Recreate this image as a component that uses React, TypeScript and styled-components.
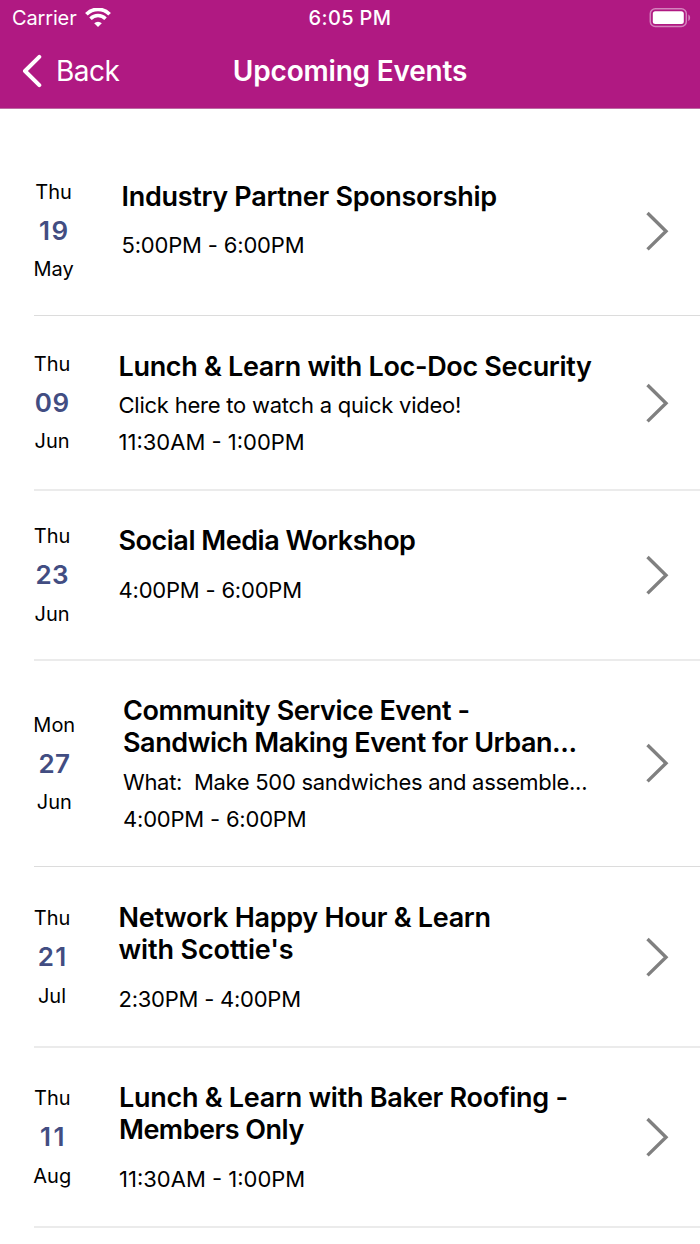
import React from "react";
import styled, { createGlobalStyle } from "styled-components";

const GlobalStyle = createGlobalStyle`
  * { box-sizing: border-box; }
  body { margin: 0; background: #fff; }
`;

const Screen = styled.div`
  width: 700px;
  height: 1244px;
  overflow: hidden;
  background: #fff;
  color: #000;
  font-family: Inter, "Liberation Sans", sans-serif;
`;

const Header = styled.header`
  height: 109px;
  background: #b01982;
  border-bottom: 1px solid #bd6aa3;
  color: #fff;
`;

const StatusBar = styled.div`
  height: 36px;
  padding: 0 9px 0 12px;
  display: grid;
  grid-template-columns: 1fr auto 1fr;
  align-items: center;
  font-size: 20px;
`;

const Carrier = styled.div`
  display: flex;
  align-items: center;
  gap: 8px;
  letter-spacing: -0.15px;

  svg {
    margin-top: -2px;
  }
`;

const Clock = styled.div`
  font-weight: 500;
  letter-spacing: 0.35px;
  margin-right: 3px;
`;

const Battery = styled.svg`
  justify-self: end;
`;

const NavBar = styled.nav`
  height: 70px;
  padding: 0 22px;
  display: grid;
  grid-template-columns: 1fr auto 1fr;
  align-items: center;
`;

const BackButton = styled.a`
  display: flex;
  align-items: center;
  gap: 14px;
  font-size: 28px;
  letter-spacing: -0.5px;
`;

const PageTitle = styled.h1`
  margin: 0;
  font-size: 28px;
  font-weight: 600;
  letter-spacing: -0.2px;
`;

const List = styled.main`
  padding: 37px 0 0 34px;
`;

const Row = styled.article<{ $height: number; $softRule?: boolean }>`
  height: ${(p) => p.$height}px;
  display: flex;
  align-items: center;
  border-bottom: 1px solid ${(p) => (p.$softRule ? "#ebebeb" : "#dcdcdc")};
  box-shadow: ${(p) => (p.$softRule ? "0 1px 0 #ebebeb" : "none")};
`;

const DateColumn = styled.div<{ $width: number; $drop?: number }>`
  width: ${(p) => p.$width}px;
  margin-top: ${(p) => (p.$drop ?? 0) * 2}px;
  flex: none;
  display: flex;
  flex-direction: column;
  align-items: center;
  white-space: nowrap;
`;

const DatePart = styled.span`
  font-size: 20px;
  line-height: 38px;
`;

const Month = styled(DatePart)<{ $lift?: number }>`
  margin-top: ${(p) => -(p.$lift ?? 0)}px;
  margin-bottom: ${(p) => p.$lift ?? 0}px;
`;

const Day = styled.span<{ $spacing: number }>`
  font-size: 26px;
  font-weight: 600;
  line-height: 40px;
  letter-spacing: ${(p) => p.$spacing}px;
  margin-right: ${(p) => -p.$spacing}px;
  color: #424d82;
`;

const Details = styled.div`
  flex: 1;
  min-width: 0;
  align-self: flex-start;
  margin-left: 48.5px;
  padding-top: 35px;
  white-space: pre;
`;

const TitleLine = styled.div<{ $spacing: number }>`
  font-size: 27px;
  font-weight: 600;
  line-height: 32px;
  letter-spacing: ${(p) => p.$spacing}px;
`;

const Summary = styled.div<{ $gap?: number; $spacing?: number }>`
  margin-top: ${(p) => p.$gap ?? 9}px;
  font-size: 22px;
  line-height: 26px;
  letter-spacing: ${(p) => p.$spacing ?? 0}px;
`;

const Time = styled.div<{ $gap: number; $spacing: number }>`
  margin-top: ${(p) => p.$gap}px;
  font-size: 22px;
  line-height: 26px;
  letter-spacing: ${(p) => p.$spacing}px;
`;

const Disclosure = styled.svg`
  flex: none;
  margin-right: 31px;
`;

type EventItem = {
  weekday: string;
  day: string;
  daySpacing: number;
  month: string;
  monthLift?: number;
  dateDrop?: number;
  title: { text: string; spacing: number }[];
  summary?: string;
  summaryGap?: number;
  summarySpacing?: number;
  time: string;
  timeGap: number;
  timeSpacing: number;
  height: number;
  dateWidth: number;
  softRule?: boolean;
};

const events: EventItem[] = [
  {
    weekday: "Thu", day: "19", daySpacing: 1.6, month: "May", monthLift: 1,
    title: [{ text: "Industry Partner Sponsorship", spacing: -0.3 }],
    time: "5:00PM - 6:00PM", timeGap: 19, timeSpacing: -0.18,
    height: 170, dateWidth: 39,
  },
  {
    weekday: "Thu", day: "09", daySpacing: 0.5, month: "Jun", monthLift: 1,
    title: [{ text: "Lunch & Learn with Loc-Doc Security", spacing: -0.32 }],
    summary: "Click here to watch a quick video!", summarySpacing: -0.23,
    time: "11:30AM - 1:00PM", timeGap: 11, timeSpacing: 0,
    height: 174, dateWidth: 36, softRule: true,
  },
  {
    weekday: "Thu", day: "23", daySpacing: 0.5, month: "Jun",
    title: [{ text: "Social Media Workshop", spacing: -0.48 }],
    time: "4:00PM - 6:00PM", timeGap: 20, timeSpacing: -0.2,
    height: 170, dateWidth: 36, softRule: true,
  },
  {
    weekday: "Mon", day: "27", daySpacing: 0.5, month: "Jun", monthLift: 1, dateDrop: 1,
    title: [
      { text: "Community Service Event -", spacing: -0.42 },
      { text: "Sandwich Making Event for Urban...", spacing: -0.44 },
    ],
    summary: "What:  Make 500 sandwiches and assemble...", summaryGap: 10, summarySpacing: -0.29,
    time: "4:00PM - 6:00PM", timeGap: 11, timeSpacing: -0.2,
    height: 207, dateWidth: 40.5,
  },
  {
    weekday: "Thu", day: "21", daySpacing: 1.4, month: "Jul",
    title: [
      { text: "Network Happy Hour & Learn", spacing: -0.29 },
      { text: "with Scottie's", spacing: -0.12 },
    ],
    time: "2:30PM - 4:00PM", timeGap: 20, timeSpacing: -0.24,
    height: 180, dateWidth: 36, softRule: true,
  },
  {
    weekday: "Thu", day: "11", daySpacing: 2.5, month: "Aug",
    title: [
      { text: "Lunch & Learn with Baker Roofing -", spacing: -0.28 },
      { text: "Members Only", spacing: -0.5 },
    ],
    time: "11:30AM - 1:00PM", timeGap: 20, timeSpacing: 0,
    height: 180, dateWidth: 36.5, softRule: true,
  },
];

export default function App() {
  return (
    <Screen>
      <GlobalStyle />
      <Header>
        <StatusBar>
          <Carrier>
            Carrier
            <svg width="26" height="19" viewBox="0 0 26 19" fill="none" stroke="#fff">
              <path d="M1.4 6.2A16.3 16.3 0 0 1 24.6 6.2" strokeWidth="3.7" />
              <path d="M5.5 10.7A10.5 10.5 0 0 1 20.5 10.7" strokeWidth="3.5" />
              <path d="M13 19L9.2 15.2A5.4 5.4 0 0 1 16.8 15.2Z" fill="#fff" stroke="none" />
            </svg>
          </Carrier>
          <Clock>6:05 PM</Clock>
          <Battery width="42" height="20" viewBox="0 0 42 20">
            <rect x="1.3" y="0.8" width="36" height="17.6" rx="5" fill="none" stroke="#d483bd" strokeWidth="1.5" />
            <rect x="3.8" y="3.3" width="31" height="12.6" rx="2.5" fill="#fff" />
            <path d="M39.3 6.5C41.7 7.5 41.7 12 39.3 13Z" fill="#d483bd" />
          </Battery>
        </StatusBar>
        <NavBar>
          <BackButton>
            <svg width="20" height="34" viewBox="0 0 20 34" fill="none" stroke="#fff" strokeWidth="4" strokeLinecap="round" strokeLinejoin="round">
              <path d="M17.3 2.8L3 17L17.3 31.2" />
            </svg>
            Back
          </BackButton>
          <PageTitle>Upcoming Events</PageTitle>
        </NavBar>
      </Header>
      <List>
        {events.map((event) => (
          <Row key={event.month + event.day} $height={event.height} $softRule={event.softRule}>
            <DateColumn $width={event.dateWidth} $drop={event.dateDrop}>
              <DatePart>{event.weekday}</DatePart>
              <Day $spacing={event.daySpacing}>{event.day}</Day>
              <Month $lift={event.monthLift}>{event.month}</Month>
            </DateColumn>
            <Details>
              {event.title.map((line) => (
                <TitleLine key={line.text} $spacing={line.spacing}>{line.text}</TitleLine>
              ))}
              {event.summary && (
                <Summary $gap={event.summaryGap} $spacing={event.summarySpacing}>{event.summary}</Summary>
              )}
              <Time $gap={event.timeGap} $spacing={event.timeSpacing}>{event.time}</Time>
            </Details>
            <Disclosure width="23" height="40" viewBox="0 0 23 40" fill="none" stroke="#808080" strokeWidth="3.4">
              <path d="M1.5 2L20 20.2L1.5 38.4" />
            </Disclosure>
          </Row>
        ))}
      </List>
    </Screen>
  );
}
